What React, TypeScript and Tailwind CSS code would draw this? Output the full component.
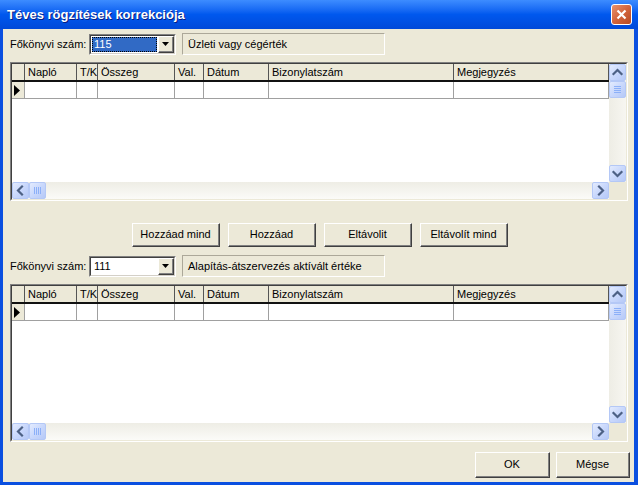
import React from "react";

type Dir = "up" | "down" | "left" | "right";

const columns = [
  { label: "", w: 13 },
  { label: "Napló", w: 52 },
  { label: "T/K", w: 21 },
  { label: "Összeg", w: 77 },
  { label: "Val.", w: 29 },
  { label: "Dátum", w: 65 },
  { label: "Bizonylatszám", w: 185 },
  { label: "Megjegyzés", w: 155 },
];

function Chevron({ dir }: { dir: Dir }) {
  const d = {
    up: "M3.5 9 L7.5 5 L11.5 9",
    down: "M3.5 6 L7.5 10 L11.5 6",
    left: "M9 3.5 L5 7.5 L9 11.5",
    right: "M6 3.5 L10 7.5 L6 11.5",
  }[dir];
  return (
    <svg width="15" height="15" viewBox="0 0 15 15">
      <path d={d} fill="none" stroke="#4d6185" strokeWidth="2.2" strokeLinecap="square" />
    </svg>
  );
}

const btnLook =
  "rounded-[2px] border border-[#b4c8f6] bg-gradient-to-br from-[#e3ebfe] via-[#c9d8fc] to-[#b6c9f7]";

function ScrollBtn({ dir }: { dir: Dir }) {
  return (
    <div className={`flex h-[17px] w-[17px] shrink-0 items-center justify-center ${btnLook}`}>
      <Chevron dir={dir} />
    </div>
  );
}

function Thumb({ vertical }: { vertical: boolean }) {
  return (
    <div className={`flex h-[17px] w-[17px] shrink-0 items-center justify-center ${btnLook}`}>
      <div className={vertical ? "flex flex-col gap-[1px]" : "flex flex-row gap-[1px]"}>
        {[0, 1, 2, 3].map((i) => (
          <div
            key={i}
            className={vertical ? "h-[1px] w-[7px] bg-[#8cb0f8]" : "h-[7px] w-[1px] bg-[#8cb0f8]"}
          />
        ))}
      </div>
    </div>
  );
}

function DataGrid({ height }: { height: number }) {
  return (
    <div
      className="flex flex-col border-t border-l border-[#808080] border-r border-b border-r-white border-b-white"
      style={{ height }}
    >
      <div className="flex min-h-0 flex-1 flex-col border-t border-l border-[#404040] border-r border-b border-r-[#ece9d8] border-b-[#ece9d8]">
        <div className="flex min-h-0 flex-1">
          <div className="flex min-w-0 flex-1 flex-col bg-white">
            <div className="flex h-[18px] border-b-2 border-[#111] bg-[#ece9d8]">
              {columns.map((c, i) => (
                <div
                  key={i}
                  className="flex shrink-0 items-center border-r border-[#555] pl-[3px]"
                  style={{ width: c.w }}
                >
                  {c.label}
                </div>
              ))}
            </div>
            <div className="flex h-[17px] border-b border-[#a0a0a0]">
              {columns.map((c, i) => (
                <div
                  key={i}
                  className={
                    i === 0
                      ? "flex shrink-0 items-center border-r border-[#a0a0a0] bg-[#ece9d8] pl-[2px]"
                      : "shrink-0 border-r border-[#a0a0a0]"
                  }
                  style={{ width: c.w }}
                >
                  {i === 0 && (
                    <svg width="6" height="11" viewBox="0 0 6 11">
                      <path d="M0 0 L6 5.5 L0 11 Z" fill="#000" />
                    </svg>
                  )}
                </div>
              ))}
            </div>
          </div>
          <div className="flex w-[17px] flex-col bg-gradient-to-r from-[#eeede5] to-[#f7f6f1]">
            <ScrollBtn dir="up" />
            <Thumb vertical />
            <div className="flex-1" />
            <ScrollBtn dir="down" />
          </div>
        </div>
        <div className="flex h-[17px]">
          <div className="flex flex-1 bg-gradient-to-b from-[#eeede5] to-[#fbfbf8]">
            <ScrollBtn dir="left" />
            <Thumb vertical={false} />
            <div className="flex-1" />
            <ScrollBtn dir="right" />
          </div>
          <div className="w-[17px] bg-[#ece9d8]" />
        </div>
      </div>
    </div>
  );
}

function Combo({ value, focused }: { value: string; focused: boolean }) {
  return (
    <div className="flex h-[21px] w-[87px] border-t border-l border-[#808080] border-r border-b border-r-white border-b-white">
      <div className="flex flex-1 border-t border-l border-[#404040] border-r border-b border-r-[#d4d0c8] border-b-[#d4d0c8] bg-white">
        <div className="flex flex-1 items-center p-[1px]">
          {focused ? (
            <div className="flex h-full w-full items-center border border-dotted border-[#000] bg-[#316ac5] pl-[1px] text-white">
              {value}
            </div>
          ) : (
            <div className="pl-[2px]">{value}</div>
          )}
        </div>
        <div className="flex w-[16px] border-t border-l border-white border-r border-b border-r-[#404040] border-b-[#404040]">
          <div className="flex flex-1 items-center justify-center border-r border-b border-[#808080] bg-[#ece9d8]">
            <svg width="7" height="4" viewBox="0 0 7 4">
              <path d="M0 0 L7 0 L3.5 4 Z" fill="#000" />
            </svg>
          </div>
        </div>
      </div>
    </div>
  );
}

function Field({ label, value, focused, desc }: { label: string; value: string; focused: boolean; desc: string }) {
  return (
    <div className="flex h-[22px] items-center">
      <div className="w-[79px]">{label}</div>
      <Combo value={value} focused={focused} />
      <div className="ml-[6px] flex h-[22px] w-[203px] items-center border border-[#aca899] border-r-white border-b-white pl-[5px]">
        {desc}
      </div>
    </div>
  );
}

function Button({ children, w, h = 24 }: { children: React.ReactNode; w: number; h?: number }) {
  return (
    <div
      className="flex border-t border-l border-white border-r border-b border-r-[#404040] border-b-[#404040] bg-[#ece9d8]"
      style={{ width: w, height: h }}
    >
      <div className="flex flex-1 items-center justify-center border-r border-b border-[#808080]">
        {children}
      </div>
    </div>
  );
}

export default function App() {
  return (
    <div className="flex h-[485px] w-[638px] flex-col bg-[#0a4fe0] font-['Liberation_Sans',Arial,sans-serif] text-[11px] text-black">
      <div className="flex h-[29px] shrink-0 items-center bg-gradient-to-b from-[#3d8cff] via-[#0058ee] to-[#0049d9] pl-[7px] pr-[6px]">
        <div className="flex-1 text-[13px] font-bold text-white [text-shadow:1px_1px_#0a1e80]">
          Téves rögzítések korrekciója
        </div>
        <div className="flex h-[21px] w-[21px] items-center justify-center rounded-[3px] border border-white bg-gradient-to-br from-[#e9926c] via-[#d2643c] to-[#b84a22]">
          <svg width="11" height="11" viewBox="0 0 11 11">
            <path d="M1.5 1.5 L9.5 9.5 M9.5 1.5 L1.5 9.5" stroke="#fff" strokeWidth="2.2" />
          </svg>
        </div>
      </div>
      <div className="mb-[3px] ml-[3px] mr-[4px] flex flex-1 flex-col bg-[#ece9d8] pl-[7px] pr-[6px]">
        <div className="mt-[4px]">
          <Field label="Főkönyvi szám:" value="115" focused desc="Üzleti vagy cégérték" />
        </div>
        <div className="mt-[7px]">
          <DataGrid height={139} />
        </div>
        <div className="ml-[122px] mt-[22px] flex gap-[8px]">
          <Button w={88}>Hozzáad mind</Button>
          <Button w={88}>Hozzáad</Button>
          <Button w={88}>Eltávolit</Button>
          <Button w={88}>Eltávolít mind</Button>
        </div>
        <div className="mt-[8px]">
          <Field label="Főkönyvi szám:" value="111" focused={false} desc="Alapítás-átszervezés aktívált értéke" />
        </div>
        <div className="mt-[7px]">
          <DataGrid height={158} />
        </div>
        <div className="mr-[-2px] mt-[10px] flex justify-end gap-[6px]">
          <Button w={75} h={26}>OK</Button>
          <Button w={74} h={26}>Mégse</Button>
        </div>
      </div>
    </div>
  );
}
